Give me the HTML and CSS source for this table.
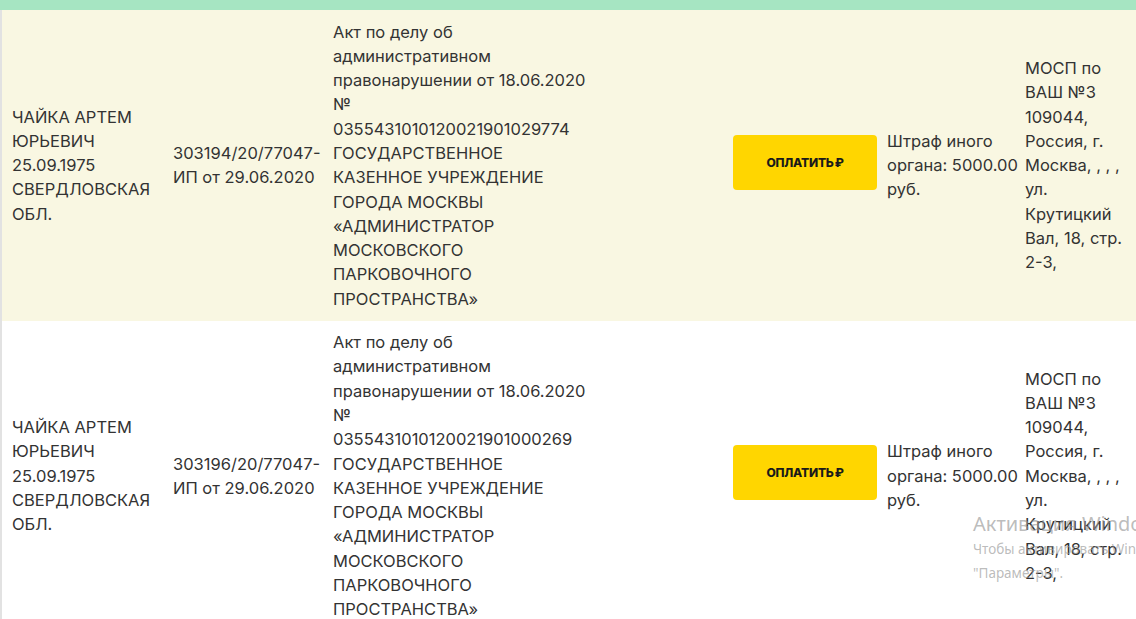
FILE: index.html
```html
<!DOCTYPE html>
<html lang="ru">
<head>
  <meta charset="UTF-8" />
  <meta name="viewport" content="width=device-width, initial-scale=1.0"/>
  <title>Задолженности</title>
  <link rel="stylesheet" href="styles.css">
</head>
<body>
  <div class="top-bar"></div>

  <div class="table-wrap">
    <table class="debts">
      <colgroup>
        <col class="c-name">
        <col class="c-case">
        <col class="c-doc">
        <col class="c-pay">
        <col class="c-sum">
        <col class="c-dept">
      </colgroup>
      <tbody>
        <tr class="odd">
          <td>ЧАЙКА АРТЕМ ЮРЬЕВИЧ 25.09.1975 СВЕРДЛОВСКАЯ ОБЛ.</td>
          <td>303194/20/77047-ИП от 29.06.2020</td>
          <td><div class="doc">Акт по делу об административном правонарушении от 18.06.2020 № 0355431010120021901029774 ГОСУДАРСТВЕННОЕ КАЗЕННОЕ УЧРЕЖДЕНИЕ ГОРОДА МОСКВЫ «АДМИНИСТРАТОР МОСКОВСКОГО ПАРКОВОЧНОГО ПРОСТРАНСТВА»</div></td>
          <td><button class="pay">ОПЛАТИТЬ<span class="rub">₽</span></button></td>
          <td class="sum">Штраф иного органа: 5000.00 руб.</td>
          <td class="dept-cell"><div class="dept">МОСП по ВАШ №3 109044, Россия, г. Москва, , , , ул. Крутицкий Вал, 18, стр. 2-3,</div></td>
        </tr>
        <tr>
          <td>ЧАЙКА АРТЕМ ЮРЬЕВИЧ 25.09.1975 СВЕРДЛОВСКАЯ ОБЛ.</td>
          <td>303196/20/77047-ИП от 29.06.2020</td>
          <td><div class="doc">Акт по делу об административном правонарушении от 18.06.2020 № 0355431010120021901000269 ГОСУДАРСТВЕННОЕ КАЗЕННОЕ УЧРЕЖДЕНИЕ ГОРОДА МОСКВЫ «АДМИНИСТРАТОР МОСКОВСКОГО ПАРКОВОЧНОГО ПРОСТРАНСТВА»</div></td>
          <td><button class="pay">ОПЛАТИТЬ<span class="rub">₽</span></button></td>
          <td class="sum">Штраф иного органа: 5000.00 руб.</td>
          <td class="dept-cell"><div class="dept">МОСП по ВАШ №3 109044, Россия, г. Москва, , , , ул. Крутицкий Вал, 18, стр. 2-3,</div></td>
        </tr>
      </tbody>
    </table>
  </div>

  <div class="watermark">
    <div class="wm-title">Активация Windows</div>
    <div class="wm-text">Чтобы активировать Windows, перейдите в раздел<br>"Параметры".</div>
  </div>
</body>
</html>
```

FILE: styles.css
```css
html, body {
  margin: 0;
  height: 100%;
}

body {
  font-family: 'Inter', 'Noto Sans', sans-serif;
  font-size: 16.5px;
  color: #333333;
  background-color: #ffffff;
  overflow: hidden;
  position: relative;
}

.top-bar {
  height: 10px;
  background-color: #a6e5c2;
}

.table-wrap {
  border-left: 2px solid #e2e2e2;
}

.debts {
  border-collapse: collapse;
  table-layout: fixed;
  width: 1150px;
}

.c-name { width: 161px; }
.c-case { width: 160px; }
.c-doc  { width: 400px; }
.c-pay  { width: 154px; }
.c-sum  { width: 141px; }
.c-dept { width: 134px; }

.debts td {
  padding: 9.5px 0 9.5px 10px;
  line-height: 24.3px;
  vertical-align: middle;
  text-align: left;
}

.debts tr.odd {
  background-color: #f9f7e2;
}

.doc {
  width: 258px;
}

.debts td.dept-cell {
  padding-left: 7px;
}

.dept {
  width: 107px;
}

.pay {
  display: block;
  width: 144px;
  height: 55px;
  background-color: #ffd600;
  border: none;
  border-radius: 4px;
  color: #1a1a1a;
  font-family: 'Inter', sans-serif;
  font-size: 12px;
  font-weight: 800;
  letter-spacing: -0.2px;
  cursor: pointer;
  margin-top: -6px;
}

.rub {
  margin-left: 1px;
}

.watermark {
  position: absolute;
  left: 973px;
  top: 511px;
  color: rgba(150, 150, 150, 0.65);
  font-family: 'Noto Sans', sans-serif;
  white-space: nowrap;
  pointer-events: none;
}

.wm-title {
  font-size: 20px;
  line-height: 26px;
}

.wm-text {
  font-size: 13.5px;
  line-height: 24px;
}
```
